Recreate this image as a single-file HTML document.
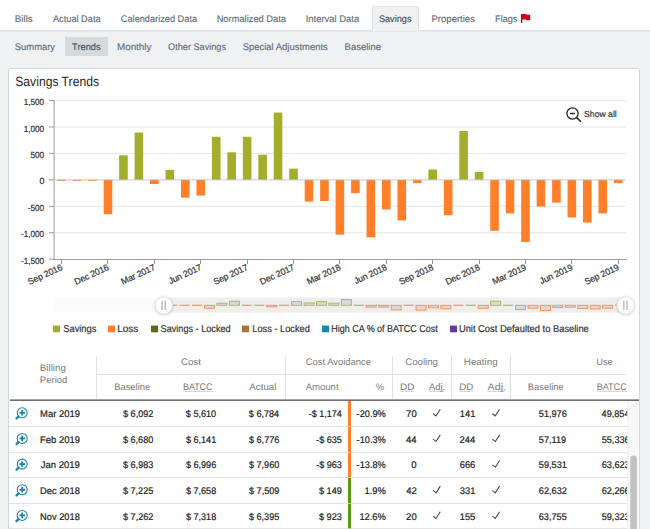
<!DOCTYPE html>
<html><head><meta charset="utf-8"><title>Savings Trends</title>
<style>html,body{margin:0;padding:0;width:650px;height:529px;overflow:hidden;background:#eff1f3;font-family:"Liberation Sans", sans-serif} text{text-rendering:geometricPrecision}</style>
</head><body><svg width="650" height="529" viewBox="0 0 650 529" style="display:block;font-family:'Liberation Sans', sans-serif"><defs><filter id="sh" x="-50%" y="-50%" width="200%" height="200%"><feDropShadow dx="0" dy="0.6" stdDeviation="0.9" flood-color="#000" flood-opacity="0.25"/></filter></defs><rect x="0" y="0" width="650" height="529" fill="#eff1f3" />
<rect x="0" y="0" width="650" height="30" fill="#ffffff" />
<rect x="0" y="30" width="650" height="1" fill="#dde1e5" />
<rect x="0" y="31" width="650" height="1" fill="#e7eaed" />
<path d="M372.5 31 V7.5 Q372.5 6.5 373.5 6.5 H417.5 Q418.5 6.5 418.5 7.5 V31" fill="#eff1f3" stroke="#dde1e5" stroke-width="1"/>
<text transform="translate(14.80,22.00) scale(1.0202,1)" font-size="9.6" fill="#5f6a75" stroke="#5f6a75" stroke-width="0.12" style="letter-spacing:0.000px" >Bills</text>
<text transform="translate(52.98,22.00) scale(0.9595,1)" font-size="9.6" fill="#5f6a75" stroke="#5f6a75" stroke-width="0.12" style="letter-spacing:0.000px" >Actual Data</text>
<text transform="translate(120.83,22.00) scale(0.9592,1)" font-size="9.6" fill="#5f6a75" stroke="#5f6a75" stroke-width="0.12" style="letter-spacing:0.000px" >Calendarized Data</text>
<text transform="translate(216.63,22.00) scale(0.9716,1)" font-size="9.6" fill="#5f6a75" stroke="#5f6a75" stroke-width="0.12" style="letter-spacing:0.000px" >Normalized Data</text>
<text transform="translate(305.63,22.00) scale(0.9843,1)" font-size="9.6" fill="#5f6a75" stroke="#5f6a75" stroke-width="0.12" style="letter-spacing:0.000px" >Interval Data</text>
<text transform="translate(431.52,22.00) scale(0.9925,1)" font-size="9.6" fill="#5f6a75" stroke="#5f6a75" stroke-width="0.12" style="letter-spacing:0.000px" >Properties</text>
<text transform="translate(495.05,22.00) scale(0.9534,1)" font-size="9.6" fill="#5f6a75" stroke="#5f6a75" stroke-width="0.12" style="letter-spacing:0.000px" >Flags</text>
<text transform="translate(378.88,22.00) scale(0.9559,1)" font-size="9.6" fill="#3f4a55" stroke="#3f4a55" stroke-width="0.12" style="letter-spacing:0.000px" >Savings</text>
<rect x="521" y="14" width="1.3" height="9" fill="#d0021b"/>
<path d="M522 14.3 Q524.5 13.3 526 14.3 Q528 15.3 530.2 14.5 V20 Q528 20.8 526 19.8 Q524.5 18.9 522 19.9 Z" fill="#d0021b"/>
<rect x="65" y="37" width="43" height="19" fill="#d5dadd" />
<text transform="translate(14.87,50.00) scale(0.9774,1)" font-size="9.6" fill="#5f6a75" stroke="#5f6a75" stroke-width="0.12" style="letter-spacing:0.000px" >Summary</text>
<text transform="translate(72.09,50.00) scale(0.9654,1)" font-size="9.6" fill="#3f4a55" stroke="#3f4a55" stroke-width="0.12" style="letter-spacing:0.000px" >Trends</text>
<text transform="translate(116.99,50.00) scale(1.0241,1)" font-size="9.6" fill="#5f6a75" stroke="#5f6a75" stroke-width="0.12" style="letter-spacing:-0.000px" >Monthly</text>
<text transform="translate(168.07,50.00) scale(0.9529,1)" font-size="9.6" fill="#5f6a75" stroke="#5f6a75" stroke-width="0.12" style="letter-spacing:0.000px" >Other Savings</text>
<text transform="translate(242.67,50.00) scale(0.9850,1)" font-size="9.6" fill="#5f6a75" stroke="#5f6a75" stroke-width="0.12" style="letter-spacing:0.000px" >Special Adjustments</text>
<text transform="translate(344.62,50.00) scale(0.9857,1)" font-size="9.6" fill="#5f6a75" stroke="#5f6a75" stroke-width="0.12" style="letter-spacing:0.000px" >Baseline</text>
<rect x="8.5" y="68.5" width="631" height="470" rx="1.5" fill="#ffffff" stroke="#d6d9dc" stroke-width="1"/>
<text transform="translate(15.25,85.80) scale(0.8997,1)" font-size="13.5" fill="#262626" stroke="#262626" stroke-width="0.0" style="letter-spacing:0.000px" >Savings Trends</text>
<rect x="55" y="100.00" width="571" height="1" fill="#e6e6e6" />
<rect x="55" y="126.45" width="571" height="1" fill="#e6e6e6" />
<rect x="55" y="152.90" width="571" height="1" fill="#e6e6e6" />
<rect x="55" y="205.80" width="571" height="1" fill="#e6e6e6" />
<rect x="55" y="232.25" width="571" height="1" fill="#e6e6e6" />
<rect x="49" y="100.00" width="5" height="1" fill="#9a9a9a" />
<rect x="49" y="126.45" width="5" height="1" fill="#9a9a9a" />
<rect x="49" y="152.90" width="5" height="1" fill="#9a9a9a" />
<rect x="49" y="179.35" width="5" height="1" fill="#9a9a9a" />
<rect x="49" y="205.80" width="5" height="1" fill="#9a9a9a" />
<rect x="49" y="232.25" width="5" height="1" fill="#9a9a9a" />
<rect x="49" y="258.70" width="5" height="1" fill="#9a9a9a" />
<rect x="53.6" y="100" width="1" height="160" fill="#9a9a9a" />
<rect x="54" y="259" width="573" height="1" fill="#9a9a9a" />
<rect x="57.28" y="179.85" width="8.6" height="1.00" fill="#ff7f2a"/><rect x="72.74" y="179.85" width="8.6" height="1.00" fill="#ff7f2a"/><rect x="88.21" y="179.85" width="8.6" height="1.00" fill="#ff7f2a"/><rect x="103.67" y="179.85" width="8.6" height="34.38" fill="#ff7f2a"/><rect x="119.13" y="155.30" width="8.6" height="24.55" fill="#a4ad2c"/><rect x="134.60" y="132.56" width="8.6" height="47.29" fill="#a4ad2c"/><rect x="150.06" y="179.85" width="8.6" height="4.23" fill="#ff7f2a"/><rect x="165.52" y="169.85" width="8.6" height="10.00" fill="#a4ad2c"/><rect x="180.98" y="179.85" width="8.6" height="17.83" fill="#ff7f2a"/><rect x="196.45" y="179.85" width="8.6" height="15.71" fill="#ff7f2a"/><rect x="211.91" y="136.79" width="8.6" height="43.06" fill="#a4ad2c"/><rect x="227.37" y="152.29" width="8.6" height="27.56" fill="#a4ad2c"/><rect x="242.84" y="136.79" width="8.6" height="43.06" fill="#a4ad2c"/><rect x="258.30" y="154.72" width="8.6" height="25.13" fill="#a4ad2c"/><rect x="273.76" y="112.56" width="8.6" height="67.29" fill="#a4ad2c"/><rect x="289.23" y="168.64" width="8.6" height="11.21" fill="#a4ad2c"/><rect x="304.69" y="179.85" width="8.6" height="21.74" fill="#ff7f2a"/><rect x="320.15" y="179.85" width="8.6" height="21.16" fill="#ff7f2a"/><rect x="335.61" y="179.85" width="8.6" height="54.80" fill="#ff7f2a"/><rect x="351.08" y="179.85" width="8.6" height="13.33" fill="#ff7f2a"/><rect x="366.54" y="179.85" width="8.6" height="57.50" fill="#ff7f2a"/><rect x="382.00" y="179.85" width="8.6" height="29.68" fill="#ff7f2a"/><rect x="397.47" y="179.85" width="8.6" height="40.57" fill="#ff7f2a"/><rect x="412.93" y="179.85" width="8.6" height="3.28" fill="#ff7f2a"/><rect x="428.39" y="169.53" width="8.6" height="10.32" fill="#a4ad2c"/><rect x="443.86" y="179.85" width="8.6" height="35.34" fill="#ff7f2a"/><rect x="459.32" y="131.02" width="8.6" height="48.83" fill="#a4ad2c"/><rect x="474.78" y="171.97" width="8.6" height="7.88" fill="#a4ad2c"/><rect x="490.25" y="179.85" width="8.6" height="50.94" fill="#ff7f2a"/><rect x="505.71" y="179.85" width="8.6" height="33.59" fill="#ff7f2a"/><rect x="521.17" y="179.85" width="8.6" height="62.10" fill="#ff7f2a"/><rect x="536.63" y="179.85" width="8.6" height="26.71" fill="#ff7f2a"/><rect x="552.10" y="179.85" width="8.6" height="22.75" fill="#ff7f2a"/><rect x="567.56" y="179.85" width="8.6" height="37.56" fill="#ff7f2a"/><rect x="583.02" y="179.85" width="8.6" height="42.80" fill="#ff7f2a"/><rect x="598.49" y="179.85" width="8.6" height="33.59" fill="#ff7f2a"/><rect x="613.95" y="179.85" width="8.6" height="3.28" fill="#ff7f2a"/>
<rect x="55" y="179.35" width="571" height="1" fill="#bdbdbd" opacity="0.8"/>
<rect x="61" y="260" width="1" height="4" fill="#9a9a9a" />
<text transform="translate(62.98,269.4) rotate(-25)" text-anchor="end" font-size="8.9" fill="#333333" stroke="#333333" stroke-width="0.2" style="letter-spacing:-0.15px">Sep 2016</text>
<rect x="107" y="260" width="1" height="4" fill="#9a9a9a" />
<text transform="translate(109.37,269.4) rotate(-25)" text-anchor="end" font-size="8.9" fill="#333333" stroke="#333333" stroke-width="0.2" style="letter-spacing:-0.15px">Dec 2016</text>
<rect x="154" y="260" width="1" height="4" fill="#9a9a9a" />
<text transform="translate(155.76,269.4) rotate(-25)" text-anchor="end" font-size="8.9" fill="#333333" stroke="#333333" stroke-width="0.2" style="letter-spacing:-0.15px">Mar 2017</text>
<rect x="200" y="260" width="1" height="4" fill="#9a9a9a" />
<text transform="translate(202.15,269.4) rotate(-25)" text-anchor="end" font-size="8.9" fill="#333333" stroke="#333333" stroke-width="0.2" style="letter-spacing:-0.15px">Jun 2017</text>
<rect x="247" y="260" width="1" height="4" fill="#9a9a9a" />
<text transform="translate(248.54,269.4) rotate(-25)" text-anchor="end" font-size="8.9" fill="#333333" stroke="#333333" stroke-width="0.2" style="letter-spacing:-0.15px">Sep 2017</text>
<rect x="293" y="260" width="1" height="4" fill="#9a9a9a" />
<text transform="translate(294.93,269.4) rotate(-25)" text-anchor="end" font-size="8.9" fill="#333333" stroke="#333333" stroke-width="0.2" style="letter-spacing:-0.15px">Dec 2017</text>
<rect x="339" y="260" width="1" height="4" fill="#9a9a9a" />
<text transform="translate(341.31,269.4) rotate(-25)" text-anchor="end" font-size="8.9" fill="#333333" stroke="#333333" stroke-width="0.2" style="letter-spacing:-0.15px">Mar 2018</text>
<rect x="386" y="260" width="1" height="4" fill="#9a9a9a" />
<text transform="translate(387.70,269.4) rotate(-25)" text-anchor="end" font-size="8.9" fill="#333333" stroke="#333333" stroke-width="0.2" style="letter-spacing:-0.15px">Jun 2018</text>
<rect x="432" y="260" width="1" height="4" fill="#9a9a9a" />
<text transform="translate(434.09,269.4) rotate(-25)" text-anchor="end" font-size="8.9" fill="#333333" stroke="#333333" stroke-width="0.2" style="letter-spacing:-0.15px">Sep 2018</text>
<rect x="479" y="260" width="1" height="4" fill="#9a9a9a" />
<text transform="translate(480.48,269.4) rotate(-25)" text-anchor="end" font-size="8.9" fill="#333333" stroke="#333333" stroke-width="0.2" style="letter-spacing:-0.15px">Dec 2018</text>
<rect x="525" y="260" width="1" height="4" fill="#9a9a9a" />
<text transform="translate(526.87,269.4) rotate(-25)" text-anchor="end" font-size="8.9" fill="#333333" stroke="#333333" stroke-width="0.2" style="letter-spacing:-0.15px">Mar 2019</text>
<rect x="571" y="260" width="1" height="4" fill="#9a9a9a" />
<text transform="translate(573.26,269.4) rotate(-25)" text-anchor="end" font-size="8.9" fill="#333333" stroke="#333333" stroke-width="0.2" style="letter-spacing:-0.15px">Jun 2019</text>
<rect x="618" y="260" width="1" height="4" fill="#9a9a9a" />
<text transform="translate(619.65,269.4) rotate(-25)" text-anchor="end" font-size="8.9" fill="#333333" stroke="#333333" stroke-width="0.2" style="letter-spacing:-0.15px">Sep 2019</text>
<text transform="translate(23.66,105.05) scale(0.9231,1)" font-size="8.9" fill="#333333" stroke="#333333" stroke-width="0.2" style="letter-spacing:0.000px" >1,500</text>
<text transform="translate(23.66,131.50) scale(0.9231,1)" font-size="8.9" fill="#333333" stroke="#333333" stroke-width="0.2" style="letter-spacing:0.000px" >1,000</text>
<text transform="translate(30.40,157.95) scale(0.9310,1)" font-size="8.9" fill="#333333" stroke="#333333" stroke-width="0.2" style="letter-spacing:0.000px" >500</text>
<text x="39.49" y="184.40" font-size="8.9" fill="#333333" stroke="#333333" stroke-width="0.2" >0</text>
<text transform="translate(27.74,210.85) scale(0.9252,1)" font-size="8.9" fill="#333333" stroke="#333333" stroke-width="0.2" style="letter-spacing:0.000px" >-500</text>
<text transform="translate(20.99,237.30) scale(0.9204,1)" font-size="8.9" fill="#333333" stroke="#333333" stroke-width="0.2" style="letter-spacing:0.000px" >-1,000</text>
<text transform="translate(20.99,263.75) scale(0.9204,1)" font-size="8.9" fill="#333333" stroke="#333333" stroke-width="0.2" style="letter-spacing:0.000px" >-1,500</text>
<circle cx="572.5" cy="113.5" r="5.6" fill="none" stroke="#222" stroke-width="1.3"/>
<rect x="570" y="112.8" width="5" height="1.4" fill="#222"/>
<path d="M576.6 117.6 L580.4 121.2" stroke="#222" stroke-width="1.5" stroke-linecap="round"/>
<text transform="translate(584.11,116.50) scale(0.9935,1)" font-size="8.7" fill="#333333" stroke="#333333" stroke-width="0.2" style="letter-spacing:0.000px" >Show all</text>
<rect x="54" y="297.6" width="572" height="15" fill="#fbfbfb" />
<rect x="164" y="297.6" width="462" height="15" fill="#eeeeee" />
<svg x="164" y="290" width="453" height="30" overflow="hidden"><g transform="translate(-164,-290)"><rect x="167.20" y="304.70" width="10" height="1.2" fill="#ff7f2a" opacity="0.8"/><rect x="179.64" y="304.70" width="10" height="1.2" fill="#ff7f2a" opacity="0.8"/><rect x="192.08" y="304.70" width="10" height="1.2" fill="#ff7f2a" opacity="0.8"/><rect x="204.52" y="305.30" width="10" height="2.92" fill="#d9d9dc" stroke="#ff7f2a" stroke-width="0.9" stroke-opacity="0.85"/><rect x="216.96" y="303.21" width="10" height="2.09" fill="#d9d9dc" stroke="#a4ad2c" stroke-width="0.9" stroke-opacity="0.85"/><rect x="229.40" y="301.28" width="10" height="4.02" fill="#d9d9dc" stroke="#a4ad2c" stroke-width="0.9" stroke-opacity="0.85"/><rect x="241.84" y="304.70" width="10" height="1.2" fill="#ff7f2a" opacity="0.8"/><rect x="254.28" y="304.70" width="10" height="1.2" fill="#a4ad2c" opacity="0.8"/><rect x="266.72" y="305.30" width="10" height="1.52" fill="#d9d9dc" stroke="#ff7f2a" stroke-width="0.9" stroke-opacity="0.85"/><rect x="279.16" y="304.70" width="10" height="1.2" fill="#ff7f2a" opacity="0.8"/><rect x="291.60" y="301.64" width="10" height="3.66" fill="#d9d9dc" stroke="#a4ad2c" stroke-width="0.9" stroke-opacity="0.85"/><rect x="304.04" y="302.96" width="10" height="2.34" fill="#d9d9dc" stroke="#a4ad2c" stroke-width="0.9" stroke-opacity="0.85"/><rect x="316.48" y="301.64" width="10" height="3.66" fill="#d9d9dc" stroke="#a4ad2c" stroke-width="0.9" stroke-opacity="0.85"/><rect x="328.92" y="303.16" width="10" height="2.14" fill="#d9d9dc" stroke="#a4ad2c" stroke-width="0.9" stroke-opacity="0.85"/><rect x="341.36" y="299.58" width="10" height="5.72" fill="#d9d9dc" stroke="#a4ad2c" stroke-width="0.9" stroke-opacity="0.85"/><rect x="353.80" y="304.70" width="10" height="1.2" fill="#a4ad2c" opacity="0.8"/><rect x="366.24" y="305.30" width="10" height="1.85" fill="#d9d9dc" stroke="#ff7f2a" stroke-width="0.9" stroke-opacity="0.85"/><rect x="378.68" y="305.30" width="10" height="1.80" fill="#d9d9dc" stroke="#ff7f2a" stroke-width="0.9" stroke-opacity="0.85"/><rect x="391.12" y="305.30" width="10" height="4.66" fill="#d9d9dc" stroke="#ff7f2a" stroke-width="0.9" stroke-opacity="0.85"/><rect x="403.56" y="304.70" width="10" height="1.2" fill="#ff7f2a" opacity="0.8"/><rect x="416.00" y="305.30" width="10" height="4.89" fill="#d9d9dc" stroke="#ff7f2a" stroke-width="0.9" stroke-opacity="0.85"/><rect x="428.44" y="305.30" width="10" height="2.52" fill="#d9d9dc" stroke="#ff7f2a" stroke-width="0.9" stroke-opacity="0.85"/><rect x="440.88" y="305.30" width="10" height="3.45" fill="#d9d9dc" stroke="#ff7f2a" stroke-width="0.9" stroke-opacity="0.85"/><rect x="453.32" y="304.70" width="10" height="1.2" fill="#ff7f2a" opacity="0.8"/><rect x="465.76" y="304.70" width="10" height="1.2" fill="#a4ad2c" opacity="0.8"/><rect x="478.20" y="305.30" width="10" height="3.01" fill="#d9d9dc" stroke="#ff7f2a" stroke-width="0.9" stroke-opacity="0.85"/><rect x="490.64" y="301.15" width="10" height="4.15" fill="#d9d9dc" stroke="#a4ad2c" stroke-width="0.9" stroke-opacity="0.85"/><rect x="503.08" y="304.70" width="10" height="1.2" fill="#a4ad2c" opacity="0.8"/><rect x="515.52" y="305.30" width="10" height="4.33" fill="#d9d9dc" stroke="#ff7f2a" stroke-width="0.9" stroke-opacity="0.85"/><rect x="527.96" y="305.30" width="10" height="2.86" fill="#d9d9dc" stroke="#ff7f2a" stroke-width="0.9" stroke-opacity="0.85"/><rect x="540.40" y="305.30" width="10" height="5.28" fill="#d9d9dc" stroke="#ff7f2a" stroke-width="0.9" stroke-opacity="0.85"/><rect x="552.84" y="305.30" width="10" height="2.27" fill="#d9d9dc" stroke="#ff7f2a" stroke-width="0.9" stroke-opacity="0.85"/><rect x="565.28" y="305.30" width="10" height="1.93" fill="#d9d9dc" stroke="#ff7f2a" stroke-width="0.9" stroke-opacity="0.85"/><rect x="577.72" y="305.30" width="10" height="3.19" fill="#d9d9dc" stroke="#ff7f2a" stroke-width="0.9" stroke-opacity="0.85"/><rect x="590.16" y="305.30" width="10" height="3.64" fill="#d9d9dc" stroke="#ff7f2a" stroke-width="0.9" stroke-opacity="0.85"/><rect x="602.60" y="305.30" width="10" height="2.86" fill="#d9d9dc" stroke="#ff7f2a" stroke-width="0.9" stroke-opacity="0.85"/><rect x="615.04" y="304.70" width="10" height="1.2" fill="#ff7f2a" opacity="0.8"/></g></svg>
<circle cx="163.8" cy="305.4" r="8.6" fill="#ffffff" stroke="#dddddd" stroke-width="0.8" filter="url(#sh)"/>
<rect x="161.6" y="300.8" width="1.0" height="9.2" fill="#a0a0a0"/><rect x="164.7" y="300.8" width="1.0" height="9.2" fill="#a0a0a0"/>
<circle cx="625.6" cy="305.4" r="8.6" fill="#ffffff" stroke="#dddddd" stroke-width="0.8" filter="url(#sh)"/>
<rect x="623.4" y="300.8" width="1.0" height="9.2" fill="#a0a0a0"/><rect x="626.5" y="300.8" width="1.0" height="9.2" fill="#a0a0a0"/>
<rect x="53" y="325.6" width="7" height="6.7" fill="#a4ad2c" />
<text transform="translate(63.28,332.30) scale(0.9292,1)" font-size="10" fill="#333333" stroke="#333333" stroke-width="0.2" style="letter-spacing:0.000px" >Savings</text>
<rect x="108" y="325.6" width="7" height="6.7" fill="#ff7f2a" />
<text transform="translate(117.18,332.30) scale(1.0029,1)" font-size="10" fill="#333333" stroke="#333333" stroke-width="0.2" style="letter-spacing:0.000px" >Loss</text>
<rect x="151" y="325.6" width="7" height="6.7" fill="#5b6b12" />
<text transform="translate(160.59,332.30) scale(0.9126,1)" font-size="10" fill="#333333" stroke="#333333" stroke-width="0.2" style="letter-spacing:0.000px" >Savings - Locked</text>
<rect x="242" y="325.6" width="7" height="6.7" fill="#a8703e" />
<text transform="translate(252.34,332.30) scale(0.9228,1)" font-size="10" fill="#333333" stroke="#333333" stroke-width="0.2" style="letter-spacing:0.000px" >Loss - Locked</text>
<rect x="322" y="325.6" width="7" height="6.7" fill="#1a86ad" />
<text transform="translate(331.26,332.30) scale(0.8964,1)" font-size="10" fill="#333333" stroke="#333333" stroke-width="0.2" style="letter-spacing:0.000px" >High CA % of BATCC Cost</text>
<rect x="450" y="325.6" width="7" height="6.7" fill="#6a3a96" />
<text transform="translate(458.88,332.30) scale(0.9350,1)" font-size="10" fill="#333333" stroke="#333333" stroke-width="0.2" style="letter-spacing:0.000px" >Unit Cost Defaulted to Baseline</text>
<rect x="96" y="356" width="1" height="44" fill="#dfe3e3" />
<rect x="285" y="356" width="1" height="44" fill="#dfe3e3" />
<rect x="392" y="356" width="1" height="44" fill="#dfe3e3" />
<rect x="451" y="356" width="1" height="44" fill="#dfe3e3" />
<rect x="510" y="356" width="1" height="44" fill="#dfe3e3" />
<rect x="96" y="374" width="531" height="1" fill="#dfe3e3" />
<rect x="10" y="399" width="629" height="1" fill="#a3a3a6" />
<rect x="10" y="400" width="629" height="1" fill="#707074" />
<text transform="translate(39.80,371.00) scale(1.0270,1)" font-size="9.5" fill="#7a7a7a" stroke="#7a7a7a" stroke-width="0.0" style="letter-spacing:0.000px" >Billing</text>
<text transform="translate(39.82,383.40) scale(1.0050,1)" font-size="9.5" fill="#7a7a7a" stroke="#7a7a7a" stroke-width="0.0" style="letter-spacing:0.000px" >Period</text>
<text transform="translate(180.91,365.00) scale(1.0221,1)" font-size="9.5" fill="#7a7a7a" stroke="#7a7a7a" stroke-width="0.0" style="letter-spacing:0.000px" >Cost</text>
<text transform="translate(305.82,365.00) scale(0.9888,1)" font-size="9.5" fill="#7a7a7a" stroke="#7a7a7a" stroke-width="0.0" style="letter-spacing:0.000px" >Cost Avoidance</text>
<text transform="translate(405.21,365.00) scale(1.0154,1)" font-size="9.5" fill="#7a7a7a" stroke="#7a7a7a" stroke-width="0.0" style="letter-spacing:0.000px" >Cooling</text>
<text transform="translate(463.79,365.00) scale(1.0334,1)" font-size="9.5" fill="#7a7a7a" stroke="#7a7a7a" stroke-width="0.0" style="letter-spacing:0.000px" >Heating</text>
<text transform="translate(596.29,365.00) scale(0.9658,1)" font-size="9.5" fill="#7a7a7a" stroke="#7a7a7a" stroke-width="0.0" style="letter-spacing:0.000px" >Use</text>
<text transform="translate(114.13,390.20) scale(0.9904,1)" font-size="9.5" fill="#7a7a7a" stroke="#7a7a7a" stroke-width="0.0" style="letter-spacing:0.000px" >Baseline</text>
<text transform="translate(182.97,390.20) scale(0.9370,1)" font-size="9.5" fill="#7a7a7a" stroke="#7a7a7a" stroke-width="0.0" style="letter-spacing:0.000px" >BATCC</text>
<text transform="translate(249.28,390.20) scale(1.0292,1)" font-size="9.5" fill="#7a7a7a" stroke="#7a7a7a" stroke-width="0.0" style="letter-spacing:-0.000px" >Actual</text>
<text transform="translate(305.68,390.20) scale(1.0045,1)" font-size="9.5" fill="#7a7a7a" stroke="#7a7a7a" stroke-width="0.0" style="letter-spacing:0.000px" >Amount</text>
<text x="375.66" y="390.20" font-size="9.5" fill="#7a7a7a" stroke="#7a7a7a" stroke-width="0.0" >%</text>
<text transform="translate(399.98,390.20) scale(1.0491,1)" font-size="9.5" fill="#7a7a7a" stroke="#7a7a7a" stroke-width="0.0" style="letter-spacing:0.000px" >DD</text>
<text transform="translate(428.98,390.20) scale(0.9881,1)" font-size="9.5" fill="#7a7a7a" stroke="#7a7a7a" stroke-width="0.0" style="letter-spacing:0.000px" >Adj.</text>
<text transform="translate(459.20,390.20) scale(1.0250,1)" font-size="9.5" fill="#7a7a7a" stroke="#7a7a7a" stroke-width="0.0" style="letter-spacing:-0.000px" >DD</text>
<text transform="translate(487.58,390.20) scale(1.1237,1)" font-size="9.5" fill="#7a7a7a" stroke="#7a7a7a" stroke-width="0.0" style="letter-spacing:0.000px" >Adj.</text>
<text transform="translate(527.83,390.20) scale(0.9847,1)" font-size="9.5" fill="#7a7a7a" stroke="#7a7a7a" stroke-width="0.0" style="letter-spacing:0.000px" >Baseline</text>
<text transform="translate(596.66,390.20) scale(0.9531,1)" font-size="9.5" fill="#7a7a7a" stroke="#7a7a7a" stroke-width="0.0" style="letter-spacing:0.000px" >BATCC</text>
<line x1="183.7" y1="391.3" x2="212.8" y2="391.3" stroke="#8a8a8a" stroke-width="0.7" stroke-dasharray="0.8,0.5"/>
<line x1="400.8" y1="391.3" x2="413.9" y2="391.3" stroke="#8a8a8a" stroke-width="0.7" stroke-dasharray="0.8,0.5"/>
<line x1="429" y1="391.3" x2="444.3" y2="391.3" stroke="#8a8a8a" stroke-width="0.7" stroke-dasharray="0.8,0.5"/>
<line x1="460" y1="391.3" x2="472.8" y2="391.3" stroke="#8a8a8a" stroke-width="0.7" stroke-dasharray="0.8,0.5"/>
<line x1="487.6" y1="391.3" x2="505" y2="391.3" stroke="#8a8a8a" stroke-width="0.7" stroke-dasharray="0.8,0.5"/>
<line x1="597.4" y1="391.3" x2="627" y2="391.3" stroke="#8a8a8a" stroke-width="0.7" stroke-dasharray="0.8,0.5"/>
<svg x="9" y="401" width="618.6" height="128" overflow="hidden"><g transform="translate(-9,-401)">
<rect x="9" y="426" width="620" height="1" fill="#e4e4e4" />
<rect x="348" y="401" width="3" height="26" fill="#ff7f2a" />
<circle cx="22.2" cy="412.80" r="5.0" fill="none" stroke="#1a80ae" stroke-width="1.05"/>
<rect x="19.4" y="411.90" width="5.6" height="1.8" fill="#1a80ae"/><rect x="21.3" y="410.00" width="1.8" height="5.6" fill="#1a80ae"/>
<path d="M18.5 416.50 L16.5 418.50" stroke="#1a80ae" stroke-width="2.3" stroke-linecap="round"/>
<text transform="translate(40.02,417.10) scale(0.9844,1)" font-size="9.6" fill="#222222" stroke="#222222" stroke-width="0.2" style="letter-spacing:0.000px" >Mar 2019</text>
<text transform="translate(123.05,417.10) scale(0.9463,1)" font-size="9.6" fill="#222222" stroke="#222222" stroke-width="0.2" style="letter-spacing:0.000px" >$ 6,092</text>
<text transform="translate(185.84,417.10) scale(0.9466,1)" font-size="9.6" fill="#222222" stroke="#222222" stroke-width="0.2" style="letter-spacing:0.000px" >$ 5,610</text>
<text transform="translate(248.84,417.10) scale(0.9469,1)" font-size="9.6" fill="#222222" stroke="#222222" stroke-width="0.2" style="letter-spacing:0.000px" >$ 6,784</text>
<text transform="translate(308.64,417.10) scale(0.9403,1)" font-size="9.6" fill="#222222" stroke="#222222" stroke-width="0.2" style="letter-spacing:0.000px" >-$ 1,174</text>
<text transform="translate(356.61,417.10) scale(0.9573,1)" font-size="9.6" fill="#222222" stroke="#222222" stroke-width="0.2" style="letter-spacing:0.000px" >-20.9%</text>
<text transform="translate(406.09,417.10) scale(0.9907,1)" font-size="9.6" fill="#222222" stroke="#222222" stroke-width="0.2" style="letter-spacing:0.000px" >70</text>
<path d="M433.1 413.50 L436.0 415.90 L440.3 409.20" fill="none" stroke="#3d4f5f" stroke-width="1.1"/>
<text transform="translate(459.75,417.10) scale(0.9742,1)" font-size="9.6" fill="#222222" stroke="#222222" stroke-width="0.2" style="letter-spacing:0.000px" >141</text>
<path d="M492.4 413.50 L495.3 415.90 L499.6 409.20" fill="none" stroke="#3d4f5f" stroke-width="1.1"/>
<text transform="translate(538.79,417.10) scale(0.9541,1)" font-size="9.6" fill="#222222" stroke="#222222" stroke-width="0.2" style="letter-spacing:0.000px" >51,976</text>
<text transform="translate(601.53,417.10) scale(0.9550,1)" font-size="9.6" fill="#222222" stroke="#222222" stroke-width="0.2" style="letter-spacing:0.000px" >49,854</text>
<rect x="9" y="452" width="620" height="1" fill="#e4e4e4" />
<rect x="348" y="427" width="3" height="25" fill="#ff7f2a" />
<circle cx="22.2" cy="438.45" r="5.0" fill="none" stroke="#1a80ae" stroke-width="1.05"/>
<rect x="19.4" y="437.55" width="5.6" height="1.8" fill="#1a80ae"/><rect x="21.3" y="435.65" width="1.8" height="5.6" fill="#1a80ae"/>
<path d="M18.5 442.15 L16.5 444.15" stroke="#1a80ae" stroke-width="2.3" stroke-linecap="round"/>
<text transform="translate(40.02,442.75) scale(0.9841,1)" font-size="9.6" fill="#222222" stroke="#222222" stroke-width="0.2" style="letter-spacing:0.000px" >Feb 2019</text>
<text transform="translate(122.94,442.75) scale(0.9466,1)" font-size="9.6" fill="#222222" stroke="#222222" stroke-width="0.2" style="letter-spacing:0.000px" >$ 6,680</text>
<text transform="translate(185.93,442.75) scale(0.9463,1)" font-size="9.6" fill="#222222" stroke="#222222" stroke-width="0.2" style="letter-spacing:0.000px" >$ 6,141</text>
<text transform="translate(248.99,442.75) scale(0.9464,1)" font-size="9.6" fill="#222222" stroke="#222222" stroke-width="0.2" style="letter-spacing:0.000px" >$ 6,776</text>
<text transform="translate(316.11,442.75) scale(0.9469,1)" font-size="9.6" fill="#222222" stroke="#222222" stroke-width="0.2" style="letter-spacing:0.000px" >-$ 635</text>
<text transform="translate(356.61,442.75) scale(0.9573,1)" font-size="9.6" fill="#222222" stroke="#222222" stroke-width="0.2" style="letter-spacing:0.000px" >-10.3%</text>
<text transform="translate(405.98,442.75) scale(0.9925,1)" font-size="9.6" fill="#222222" stroke="#222222" stroke-width="0.2" style="letter-spacing:0.000px" >44</text>
<path d="M433.1 439.15 L436.0 441.55 L440.3 434.85" fill="none" stroke="#3d4f5f" stroke-width="1.1"/>
<text transform="translate(459.54,442.75) scale(0.9761,1)" font-size="9.6" fill="#222222" stroke="#222222" stroke-width="0.2" style="letter-spacing:0.000px" >244</text>
<path d="M492.4 439.15 L495.3 441.55 L499.6 434.85" fill="none" stroke="#3d4f5f" stroke-width="1.1"/>
<text transform="translate(538.82,442.75) scale(0.9540,1)" font-size="9.6" fill="#222222" stroke="#222222" stroke-width="0.2" style="letter-spacing:0.000px" >57,119</text>
<text transform="translate(601.69,442.75) scale(0.9541,1)" font-size="9.6" fill="#222222" stroke="#222222" stroke-width="0.2" style="letter-spacing:0.000px" >55,336</text>
<rect x="9" y="477" width="620" height="1" fill="#e4e4e4" />
<rect x="348" y="452" width="3" height="26" fill="#ff7f2a" />
<circle cx="22.2" cy="464.10" r="5.0" fill="none" stroke="#1a80ae" stroke-width="1.05"/>
<rect x="19.4" y="463.20" width="5.6" height="1.8" fill="#1a80ae"/><rect x="21.3" y="461.30" width="1.8" height="5.6" fill="#1a80ae"/>
<path d="M18.5 467.80 L16.5 469.80" stroke="#1a80ae" stroke-width="2.3" stroke-linecap="round"/>
<text transform="translate(40.65,468.40) scale(0.9949,1)" font-size="9.6" fill="#222222" stroke="#222222" stroke-width="0.2" style="letter-spacing:0.000px" >Jan 2019</text>
<text transform="translate(122.99,468.40) scale(0.9464,1)" font-size="9.6" fill="#222222" stroke="#222222" stroke-width="0.2" style="letter-spacing:0.000px" >$ 6,983</text>
<text transform="translate(185.89,468.40) scale(0.9464,1)" font-size="9.6" fill="#222222" stroke="#222222" stroke-width="0.2" style="letter-spacing:0.000px" >$ 6,996</text>
<text transform="translate(248.94,468.40) scale(0.9466,1)" font-size="9.6" fill="#222222" stroke="#222222" stroke-width="0.2" style="letter-spacing:0.000px" >$ 7,960</text>
<text transform="translate(316.13,468.40) scale(0.9469,1)" font-size="9.6" fill="#222222" stroke="#222222" stroke-width="0.2" style="letter-spacing:0.000px" >-$ 963</text>
<text transform="translate(356.61,468.40) scale(0.9573,1)" font-size="9.6" fill="#222222" stroke="#222222" stroke-width="0.2" style="letter-spacing:0.000px" >-13.8%</text>
<text x="411.14" y="468.40" font-size="9.6" fill="#222222" stroke="#222222" stroke-width="0.2" >0</text>
<text transform="translate(459.69,468.40) scale(0.9755,1)" font-size="9.6" fill="#222222" stroke="#222222" stroke-width="0.2" style="letter-spacing:0.000px" >666</text>
<path d="M492.4 464.80 L495.3 467.20 L499.6 460.50" fill="none" stroke="#3d4f5f" stroke-width="1.1"/>
<text transform="translate(538.84,468.40) scale(0.9540,1)" font-size="9.6" fill="#222222" stroke="#222222" stroke-width="0.2" style="letter-spacing:0.000px" >59,531</text>
<text transform="translate(601.70,468.40) scale(0.9538,1)" font-size="9.6" fill="#222222" stroke="#222222" stroke-width="0.2" style="letter-spacing:0.000px" >63,623</text>
<rect x="9" y="503" width="620" height="1" fill="#e4e4e4" />
<rect x="348" y="478" width="3" height="26" fill="#5a9a12" />
<circle cx="22.2" cy="489.75" r="5.0" fill="none" stroke="#1a80ae" stroke-width="1.05"/>
<rect x="19.4" y="488.85" width="5.6" height="1.8" fill="#1a80ae"/><rect x="21.3" y="486.95" width="1.8" height="5.6" fill="#1a80ae"/>
<path d="M18.5 493.45 L16.5 495.45" stroke="#1a80ae" stroke-width="2.3" stroke-linecap="round"/>
<text transform="translate(40.04,494.05) scale(0.9702,1)" font-size="9.6" fill="#222222" stroke="#222222" stroke-width="0.2" style="letter-spacing:0.000px" >Dec 2018</text>
<text transform="translate(122.97,494.05) scale(0.9465,1)" font-size="9.6" fill="#222222" stroke="#222222" stroke-width="0.2" style="letter-spacing:0.000px" >$ 7,225</text>
<text transform="translate(185.88,494.05) scale(0.9465,1)" font-size="9.6" fill="#222222" stroke="#222222" stroke-width="0.2" style="letter-spacing:0.000px" >$ 7,658</text>
<text transform="translate(249.02,494.05) scale(0.9463,1)" font-size="9.6" fill="#222222" stroke="#222222" stroke-width="0.2" style="letter-spacing:0.000px" >$ 7,509</text>
<text transform="translate(318.96,494.05) scale(0.9564,1)" font-size="9.6" fill="#222222" stroke="#222222" stroke-width="0.2" style="letter-spacing:0.000px" >$ 149</text>
<text transform="translate(364.52,494.05) scale(0.9696,1)" font-size="9.6" fill="#222222" stroke="#222222" stroke-width="0.2" style="letter-spacing:0.000px" >1.9%</text>
<text transform="translate(406.19,494.05) scale(0.9915,1)" font-size="9.6" fill="#222222" stroke="#222222" stroke-width="0.2" style="letter-spacing:0.000px" >42</text>
<path d="M433.1 490.45 L436.0 492.85 L440.3 486.15" fill="none" stroke="#3d4f5f" stroke-width="1.1"/>
<text transform="translate(459.73,494.05) scale(0.9758,1)" font-size="9.6" fill="#222222" stroke="#222222" stroke-width="0.2" style="letter-spacing:0.000px" >331</text>
<path d="M492.4 490.45 L495.3 492.85 L499.6 486.15" fill="none" stroke="#3d4f5f" stroke-width="1.1"/>
<text transform="translate(538.86,494.05) scale(0.9536,1)" font-size="9.6" fill="#222222" stroke="#222222" stroke-width="0.2" style="letter-spacing:0.000px" >62,632</text>
<text transform="translate(601.70,494.05) scale(0.9538,1)" font-size="9.6" fill="#222222" stroke="#222222" stroke-width="0.2" style="letter-spacing:0.000px" >62,266</text>
<rect x="9" y="528" width="620" height="1" fill="#e4e4e4" />
<rect x="348" y="504" width="3" height="25" fill="#5a9a12" />
<circle cx="22.2" cy="515.40" r="5.0" fill="none" stroke="#1a80ae" stroke-width="1.05"/>
<rect x="19.4" y="514.50" width="5.6" height="1.8" fill="#1a80ae"/><rect x="21.3" y="512.60" width="1.8" height="5.6" fill="#1a80ae"/>
<path d="M18.5 519.10 L16.5 521.10" stroke="#1a80ae" stroke-width="2.3" stroke-linecap="round"/>
<text transform="translate(40.04,519.70) scale(0.9702,1)" font-size="9.6" fill="#222222" stroke="#222222" stroke-width="0.2" style="letter-spacing:0.000px" >Nov 2018</text>
<text transform="translate(123.05,519.70) scale(0.9463,1)" font-size="9.6" fill="#222222" stroke="#222222" stroke-width="0.2" style="letter-spacing:0.000px" >$ 7,262</text>
<text transform="translate(185.88,519.70) scale(0.9465,1)" font-size="9.6" fill="#222222" stroke="#222222" stroke-width="0.2" style="letter-spacing:0.000px" >$ 7,318</text>
<text transform="translate(248.97,519.70) scale(0.9465,1)" font-size="9.6" fill="#222222" stroke="#222222" stroke-width="0.2" style="letter-spacing:0.000px" >$ 6,395</text>
<text transform="translate(318.92,519.70) scale(0.9566,1)" font-size="9.6" fill="#222222" stroke="#222222" stroke-width="0.2" style="letter-spacing:0.000px" >$ 923</text>
<text transform="translate(359.46,519.70) scale(0.9652,1)" font-size="9.6" fill="#222222" stroke="#222222" stroke-width="0.2" style="letter-spacing:0.000px" >12.6%</text>
<text transform="translate(406.09,519.70) scale(0.9908,1)" font-size="9.6" fill="#222222" stroke="#222222" stroke-width="0.2" style="letter-spacing:0.000px" >20</text>
<path d="M433.1 516.10 L436.0 518.50 L440.3 511.80" fill="none" stroke="#3d4f5f" stroke-width="1.1"/>
<text transform="translate(459.68,519.70) scale(0.9745,1)" font-size="9.6" fill="#222222" stroke="#222222" stroke-width="0.2" style="letter-spacing:0.000px" >155</text>
<path d="M492.4 516.10 L495.3 518.50 L499.6 511.80" fill="none" stroke="#3d4f5f" stroke-width="1.1"/>
<text transform="translate(538.78,519.70) scale(0.9539,1)" font-size="9.6" fill="#222222" stroke="#222222" stroke-width="0.2" style="letter-spacing:0.000px" >63,755</text>
<text transform="translate(601.69,519.70) scale(0.9541,1)" font-size="9.6" fill="#222222" stroke="#222222" stroke-width="0.2" style="letter-spacing:0.000px" >59,323</text>
<rect x="348" y="426" width="3" height="1" fill="#ffffff" opacity="0.55"/>
<rect x="348" y="452" width="3" height="1" fill="#ffffff" opacity="0.55"/>
<rect x="348" y="477" width="3" height="1" fill="#ffffff" opacity="0.55"/>
<rect x="348" y="503" width="3" height="1" fill="#ffffff" opacity="0.55"/>
<rect x="348" y="528" width="3" height="1" fill="#ffffff" opacity="0.55"/>
</g></svg>
<rect x="627.6" y="401" width="11" height="128" fill="#f8f8f8" />
<rect x="627.6" y="401" width="0.6" height="128" fill="#ececec" />
<rect x="630.3" y="455.6" width="6.6" height="80" rx="3.3" fill="#c1c1c1"/></svg></body></html>
